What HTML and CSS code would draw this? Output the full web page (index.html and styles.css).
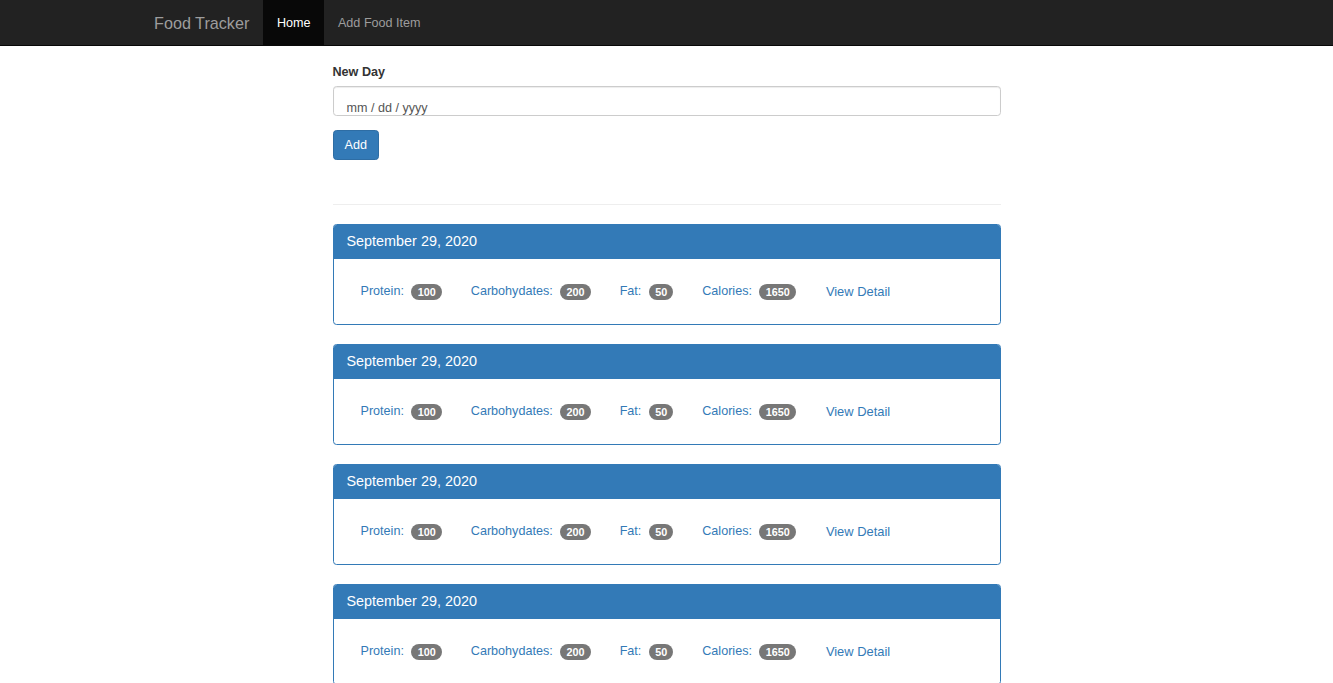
FILE: index.html
```html
<!DOCTYPE html>
<html>
<head>
<meta charset="utf-8">
<title>Food Tracker</title>
<link rel="stylesheet" href="styles.css">
</head>
<body>
<nav class="navbar">
  <div class="nav-inner">
    <a class="brand" href="#">Food Tracker</a>
    <a class="nav-link active" href="#">Home</a>
    <a class="nav-link" href="#">Add Food Item</a>
  </div>
</nav>
<main class="main">
  <form class="day-form">
    <label class="label">New Day</label>
    <div class="date-input">mm / dd / yyyy</div>
    <button type="button" class="btn">Add</button>
  </form>
  <hr class="rule">
  <section class="panel">
    <div class="panel-heading">September 29, 2020</div>
    <div class="panel-body">
      <a class="pill" href="#">Protein: <span class="badge">100</span></a>
      <a class="pill" href="#">Carbohydates: <span class="badge">200</span></a>
      <a class="pill" href="#">Fat: <span class="badge">50</span></a>
      <a class="pill" href="#">Calories: <span class="badge">1650</span></a>
      <a class="pill detail" href="#">View Detail</a>
    </div>
  </section>
  <section class="panel">
    <div class="panel-heading">September 29, 2020</div>
    <div class="panel-body">
      <a class="pill" href="#">Protein: <span class="badge">100</span></a>
      <a class="pill" href="#">Carbohydates: <span class="badge">200</span></a>
      <a class="pill" href="#">Fat: <span class="badge">50</span></a>
      <a class="pill" href="#">Calories: <span class="badge">1650</span></a>
      <a class="pill detail" href="#">View Detail</a>
    </div>
  </section>
  <section class="panel">
    <div class="panel-heading">September 29, 2020</div>
    <div class="panel-body">
      <a class="pill" href="#">Protein: <span class="badge">100</span></a>
      <a class="pill" href="#">Carbohydates: <span class="badge">200</span></a>
      <a class="pill" href="#">Fat: <span class="badge">50</span></a>
      <a class="pill" href="#">Calories: <span class="badge">1650</span></a>
      <a class="pill detail" href="#">View Detail</a>
    </div>
  </section>
  <section class="panel">
    <div class="panel-heading">September 29, 2020</div>
    <div class="panel-body">
      <a class="pill" href="#">Protein: <span class="badge">100</span></a>
      <a class="pill" href="#">Carbohydates: <span class="badge">200</span></a>
      <a class="pill" href="#">Fat: <span class="badge">50</span></a>
      <a class="pill" href="#">Calories: <span class="badge">1650</span></a>
      <a class="pill detail" href="#">View Detail</a>
    </div>
  </section>
</main>
</body>
</html>
```

FILE: styles.css
```css
* { box-sizing: border-box; }
html, body { margin: 0; padding: 0; }
body {
  font-family: "Liberation Sans", Arial, Helvetica, sans-serif;
  font-size: 12.6px;
  line-height: 18px;
  color: #333;
  background: #fff;
}
a { text-decoration: none; }

.navbar {
  height: 46px;
  background: #222;
  border-bottom: 1px solid #080808;
}
.nav-inner {
  width: 1053px;
  margin: 0 auto;
  display: flex;
  height: 45px;
}
.brand {
  display: flex;
  align-items: center;
  padding: 0 13.5px 0 14px;
  font-size: 16.2px;
  color: #9d9d9d;
}
.nav-link {
  display: flex;
  align-items: center;
  padding: 0 13.5px 0 14px;
  color: #9d9d9d;
}
.nav-link.active {
  background: #080808;
  color: #fff;
}

.main {
  width: 668px;
  margin: 17px auto 0;
}
.label {
  display: block;
  font-weight: bold;
  height: 18px;
  margin-bottom: 5px;
}
.date-input {
  height: 30px;
  border: 1px solid #ccc;
  border-radius: 3.6px;
  padding: 12px 0 0 13px;
  color: #555;
  line-height: 18px;
  box-shadow: inset 0 1px 1px rgba(0,0,0,.075);
  overflow: hidden;
}
.btn {
  display: block;
  margin-top: 14px;
  height: 30px;
  padding: 0 11px;
  background: #337ab7;
  border: 1px solid #2e6da4;
  border-radius: 3.6px;
  color: #fff;
  font-family: inherit;
  font-size: 12.6px;
}
.rule {
  margin: 44px 0 19px;
  border: 0;
  border-top: 1px solid #eee;
  height: 0;
}
.panel {
  border: 1px solid #337ab7;
  border-radius: 3.6px;
  margin-bottom: 19px;
  overflow: hidden;
}
.panel-heading {
  background: #337ab7;
  color: #fff;
  font-size: 14.4px;
  line-height: 16px;
  padding: 8px 13px 10px;
  height: 34px;
}
.panel-body {
  display: flex;
  gap: 1.8px;
  padding: 14px 13.5px;
  height: 65px;
}
.pill {
  display: flex;
  align-items: center;
  padding: 0 13.5px;
  height: 36px;
  color: #337ab7;
  white-space: pre;
}
.pill.detail { padding-top: 2px; padding-left: 14.5px; font-size: 12.9px; }
.badge {
  display: inline-block;
  margin-left: 4px;
  min-width: 10px;
  padding: 2.7px 6.3px;
  font-size: 10.8px;
  font-weight: bold;
  line-height: 1;
  color: #fff;
  background: #777;
  border-radius: 9px;
  position: relative;
  top: 1px;
}
```
